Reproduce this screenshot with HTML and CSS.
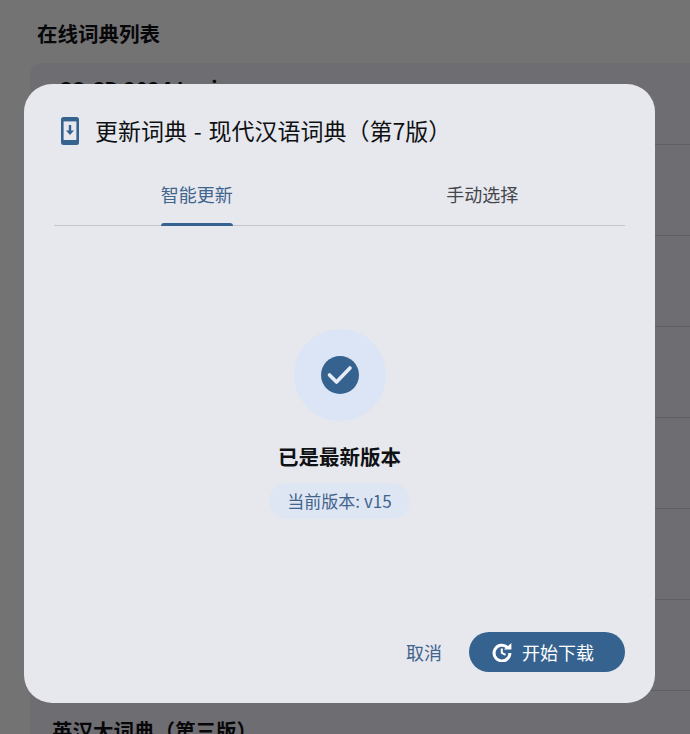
FILE: index.html
```html
<!DOCTYPE html>
<html lang="zh-CN">
<head>
<meta charset="utf-8">
<title>更新词典</title>
<link rel="stylesheet" href="styles.css">
</head>
<body>
<main class="page">
  <h1 class="page-title">在线词典列表</h1>
  <section class="dict-list">
    <div class="dict-row first"><span class="dict-name">CC-CD 2024 Lexicon</span></div>
    <div class="dict-row"></div>
    <div class="dict-row"></div>
    <div class="dict-row"></div>
    <div class="dict-row"></div>
    <div class="dict-row"></div>
    <div class="dict-row"></div>
    <div class="dict-row last"><span class="dict-name">英汉大词典（第三版）</span></div>
  </section>
</main>
<div class="scrim"></div>
<div class="dialog" role="dialog">
  <header class="dialog-head">
    <svg class="head-icon" viewBox="0 0 18 28" width="18" height="28"><rect width="18" height="28" rx="2.5" fill="#35628f"/><rect x="2.6" y="4.4" width="12.8" height="18.6" fill="#e6e8ee"/><path d="M7.8 8h2.4v5.4h2.8L9 18l-4-4.6h2.8z" fill="#35628f"/></svg>
    <h2 class="dialog-title">更新词典 - 现代汉语词典（第7版）</h2>
  </header>
  <nav class="tabs">
    <div class="tab active"><span class="tab-label">智能更新</span></div>
    <div class="tab"><span class="tab-label">手动选择</span></div>
  </nav>
  <div class="status">
    <div class="halo">
      <svg viewBox="0 0 38 38" width="38" height="38"><circle cx="19" cy="19" r="19" fill="#35628f"/><path d="M8.5 19l7 7L29 12" fill="none" stroke="#e6ecf5" stroke-width="3.6" stroke-linecap="round" stroke-linejoin="round"/></svg>
    </div>
    <div class="status-title">已是最新版本</div>
    <div class="chip">当前版本: v15</div>
  </div>
  <footer class="actions">
    <button class="btn-text">取消</button>
    <button class="btn-primary">
      <svg viewBox="0 0 20 20" width="20" height="20"><path d="M15.4 5.3A7.9 7.9 0 1 0 17.9 11" fill="none" stroke="#fff" stroke-width="3"/><path d="M11.8 7.6L19.4.9v6.7z" fill="#fff"/><path d="M9.8 6.4v4.6l3.8 1.9" fill="none" stroke="#fff" stroke-width="2"/></svg>
      <span>开始下载</span>
    </button>
  </footer>
</div>
</body>
</html>
```
FILE: styles.css
```css
* { box-sizing: border-box; }
html, body { margin: 0; height: 100%; overflow: hidden; }
body {
  width: 690px;
  height: 734px;
  position: relative;
  background: #fafafc;
  font-family: "Noto Sans CJK SC", "Noto Sans", sans-serif;
  color: #101114;
}
.page { height: 734px; overflow: hidden; padding: 19px 0 0 30px; }
.page-title {
  margin: 0 0 0 7px;
  font-size: 20.5px;
  line-height: 28px;
  font-weight: 700;
}
.dict-list {
  margin-top: 16px;
  background: #f0eff8;
  border-radius: 12px 0 0 12px;
  overflow: hidden;
}
.dict-row {
  height: 91px;
  padding: 25px 0 0 22px;
  border-bottom: 1px solid #d0d0d8;
}
.dict-row.first { height: 82px; padding: 11px 0 0 28px; }
.dict-name { font-size: 20.5px; line-height: 28px; font-weight: 700; }
.scrim {
  position: absolute;
  inset: 0;
  background: rgba(0, 0, 0, 0.54);
}
.dialog {
  position: absolute;
  left: 24px;
  top: 84px;
  width: 631px;
  height: 619px;
  padding: 0 30px 31px;
  background: #e6e8ee;
  border-radius: 28px;
  display: flex;
  flex-direction: column;
}
.dialog-head {
  height: 92px;
  padding: 0 0 0 7px;
  display: flex;
  align-items: center;
  gap: 16px;
}
.head-icon { flex: none; margin-top: 1px; }
.dialog-title {
  margin: 0;
  font-size: 23px;
  line-height: 30px;
  font-weight: 400;
  word-spacing: 1.6px;
  color: #0f1012;
}
.tabs {
  display: flex;
  height: 50px;
  border-bottom: 1px solid #c4c6cd;
}
.tab {
  flex: 1;
  display: flex;
  justify-content: center;
}
.tab-label {
  position: relative;
  font-size: 18px;
  line-height: 36px;
  color: #45464c;
}
.tab.active .tab-label { color: #41648c; }
.tab.active .tab-label::after {
  content: "";
  position: absolute;
  left: 0;
  right: 0;
  top: 47px;
  height: 3px;
  background: #35628f;
  border-radius: 3px 3px 0 0;
}
.status {
  flex: 1;
  display: flex;
  flex-direction: column;
  align-items: center;
  padding-top: 103px;
}
.halo {
  width: 92px;
  height: 92px;
  border-radius: 50%;
  background: #dbe5f5;
  display: flex;
  align-items: center;
  justify-content: center;
}
.status-title {
  margin-top: 19px;
  font-size: 20.5px;
  line-height: 32px;
  font-weight: 700;
  color: #101114;
}
.chip {
  margin-top: 11px;
  height: 36px;
  padding: 0 18px;
  border-radius: 18px;
  background: #dfe6f3;
  font-size: 17px;
  line-height: 35px;
  color: #41648c;
}
.actions {
  display: flex;
  justify-content: flex-end;
  align-items: center;
  gap: 27px;
}
.btn-text {
  border: 0;
  background: none;
  padding: 0;
  font: inherit;
  font-size: 18px;
  color: #41648c;
}
.btn-primary {
  width: 156px;
  height: 40px;
  border: 0;
  border-radius: 20px;
  background: #35628f;
  color: #fff;
  font: inherit;
  font-size: 18px;
  display: flex;
  align-items: center;
  gap: 10px;
  padding: 0 0 0 23px;
}
```
